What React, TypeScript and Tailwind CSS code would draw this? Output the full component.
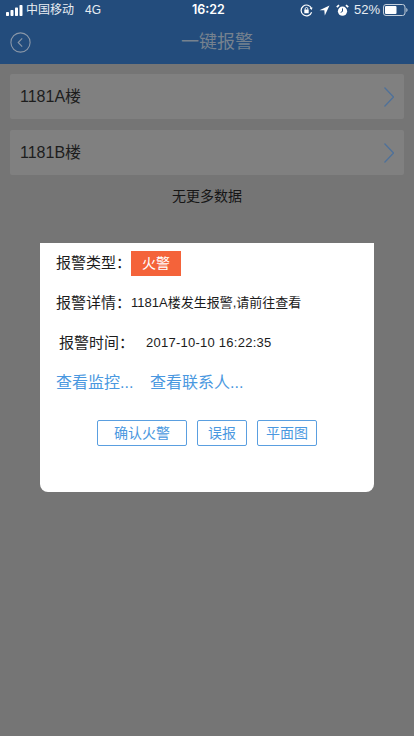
const cjk = "font-['Liberation_Sans','Noto_Sans_CJK_SC',sans-serif]";

function Signal() {
  return (
    <svg width="17" height="11" viewBox="0 0 17 11" fill="#fff">
      <rect x="0" y="7" width="3" height="4" rx="0.7" />
      <rect x="4.5" y="5" width="3" height="6" rx="0.7" />
      <rect x="9" y="2.5" width="3" height="8.5" rx="0.7" />
      <rect x="13.5" y="0" width="3" height="11" rx="0.7" />
    </svg>
  );
}

function RotationLock() {
  return (
    <svg width="13" height="13" viewBox="0 0 13 13" fill="none">
      <path d="M11.6 8.2A5.4 5.4 0 1 1 11.5 4.4" stroke="#fff" strokeWidth="1.2" />
      <path d="M12.6 3.4 11.6 6l-2-1.9z" fill="#fff" />
      <rect x="4.3" y="5.6" width="4.4" height="3.6" rx="0.5" fill="#fff" />
      <path d="M5.2 5.8V4.8a1.3 1.3 0 0 1 2.6 0v1" stroke="#fff" strokeWidth="0.9" />
    </svg>
  );
}

function LocationArrow() {
  return (
    <svg width="11" height="11" viewBox="0 0 11 11" fill="#fff">
      <path d="M10.5 0.5 0.5 5.2h4.8l.5 5.3z" />
    </svg>
  );
}

function Alarm() {
  return (
    <svg width="13" height="13" viewBox="0 0 13 13" fill="none">
      <circle cx="6.5" cy="7.2" r="4.6" fill="#fff" />
      <path d="M6.5 4.4v3l-1.8 1" stroke="#234c7c" strokeWidth="1" />
      <path d="M0.8 3.2 3 1.1M12.2 3.2 10 1.1" stroke="#fff" strokeWidth="1.7" />
    </svg>
  );
}

function Battery() {
  return (
    <svg width="25" height="12" viewBox="0 0 25 12" fill="none">
      <rect x="0.5" y="0.5" width="21.5" height="11" rx="2.5" stroke="#c4cfdb" />
      <rect x="2" y="2" width="11.5" height="8" rx="1" fill="#fff" />
      <path d="M23.3 4v4c.8-.3 1.2-1.1 1.2-2s-.4-1.7-1.2-2z" fill="#c4cfdb" />
    </svg>
  );
}

function BackIcon() {
  return (
    <svg width="21" height="21" viewBox="0 0 21 21" fill="none" stroke="#8a97a8" strokeWidth="1.1">
      <circle cx="10.5" cy="10.5" r="9.6" />
      <path d="M12.2 6.4 8.2 10.5l4 4.1" />
    </svg>
  );
}

function Chevron() {
  return (
    <svg width="10" height="20" viewBox="0 0 10 20" fill="none" stroke="#4f7199" strokeWidth="1.3">
      <path d="M0.5 0.5 9.5 10 0.5 19.5" />
    </svg>
  );
}

function Row({ name }: { name: string }) {
  return (
    <div className="h-[45px] bg-[#808080] rounded-[2px] flex items-center justify-between px-[10px]">
      <span className="text-[16px] leading-[20px] pt-[1px] text-[#1d1d1d]">{name}</span>
      <Chevron />
    </div>
  );
}

export default function App() {
  return (
    <div className={`relative w-[414px] h-[736px] overflow-hidden bg-[#757575] ${cjk}`}>
      {/* header */}
      <div className="h-[64px] bg-[#234c7c]">
        <div className="h-[20px] relative flex items-center justify-between pl-[6px] pr-[6px] text-white text-[13px]">
          <div className="flex items-center">
            <Signal />
            <span className="ml-[3px] text-[12px] text-[#e8edf2]">中国移动</span>
            <span className="ml-[11px] text-[12px] text-[#e8edf2]">4G</span>
          </div>
          <span className="absolute left-[192px] top-[2px] font-['Inter',sans-serif] text-[12.5px] font-semibold leading-[16px]">16:22</span>
          <div className="flex items-center">
            <RotationLock />
            <span className="ml-[6px]"><LocationArrow /></span>
            <span className="ml-[6px]"><Alarm /></span>
            <span className="ml-[5px] text-[#e8edf2]">52%</span>
            <span className="ml-[3px]"><Battery /></span>
          </div>
        </div>
        <div className="h-[44px] relative flex items-center justify-center pl-[20px]">
          <span className="absolute left-[10px] top-[12px]"><BackIcon /></span>
          <span className="text-[18px] text-[#76828f]">一键报警</span>
        </div>
      </div>

      {/* list */}
      <div className="px-[10px] pt-[10px] flex flex-col gap-[11px]">
        <Row name="1181A楼" />
        <Row name="1181B楼" />
      </div>
      <p className="mt-[11px] text-center text-[14px] leading-[20px] text-[#161616]">无更多数据</p>

      {/* alert dialog */}
      <div className="absolute left-[40px] top-[243px] w-[334px] h-[249px] bg-white rounded-b-[8px] pl-[16px] pt-[8px]">
        <div className="flex items-center h-[25px]">
          <span className="w-[75px] text-[15px] text-[#1c1c1c]">报警类型：</span>
          <span className="w-[50px] h-[25px] bg-[#f4633a] text-white text-[14px] flex items-center justify-center">火警</span>
        </div>
        <div className="flex items-center h-[20px] mt-[17px]">
          <span className="w-[75px] text-[15px] text-[#1c1c1c]">报警详情：</span>
          <span className="text-[13px] text-[#1c1c1c]">1181A楼发生报警,请前往查看</span>
        </div>
        <div className="flex items-center h-[20px] mt-[20px] pl-[3px]">
          <span className="w-[87px] text-[15px] text-[#1c1c1c]">报警时间：</span>
          <span className="text-[13px] tracking-[0.25px] text-[#1c1c1c]">2017-10-10 16:22:35</span>
        </div>
        <div className="flex items-center h-[20px] mt-[20px] text-[16px] text-[#4a98e0]">
          <span className="w-[94px]">查看监控...</span>
          <span>查看联系人...</span>
        </div>
        <div className="flex mt-[27px] ml-[41px] gap-[10px] text-[14px] text-[#4a98e0]">
          <button className="w-[90px] h-[26px] border border-[#5a9fe0] rounded-[2px] flex items-center justify-center">确认火警</button>
          <button className="w-[50px] h-[26px] border border-[#5a9fe0] rounded-[2px] flex items-center justify-center">误报</button>
          <button className="w-[60px] h-[26px] border border-[#5a9fe0] rounded-[2px] flex items-center justify-center">平面图</button>
        </div>
      </div>
    </div>
  );
}
